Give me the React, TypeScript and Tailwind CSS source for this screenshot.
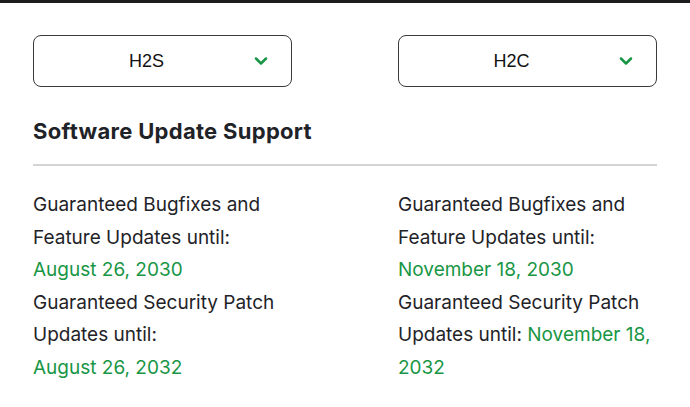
import { ChevronDown } from "lucide-react";

type Col = {
  model: string;
  featureDate: string;
  securityDate: string;
  dateOnOwnLine: boolean;
};

const cols: Col[] = [
  { model: "H2S", featureDate: "August 26, 2030", securityDate: "August 26, 2032", dateOnOwnLine: true },
  { model: "H2C", featureDate: "November 18, 2030", securityDate: "November 18, 2032", dateOnOwnLine: false },
];

function Select({ label }: { label: string }) {
  return (
    <div className="relative flex h-[52px] w-[259px] items-center justify-center rounded-lg border-[1.5px] border-[#3a3a3a] bg-white pr-8">
      <span className="font-['Liberation_Sans',Arial,sans-serif] text-[18px] text-[#111]">{label}</span>
      <ChevronDown className="absolute right-[20px] h-5 w-5 text-[#189645]" strokeWidth={3} />
    </div>
  );
}

function Column({ col }: { col: Col }) {
  return (
    <div className="w-[259px] text-[19px] leading-[32.5px] text-[#1f2328]">
      <p>Guaranteed Bugfixes and Feature Updates until:</p>
      <p className="text-[#189645]">{col.featureDate}</p>
      {col.dateOnOwnLine ? (
        <>
          <p>Guaranteed Security Patch Updates until:</p>
          <p className="text-[#189645]">{col.securityDate}</p>
        </>
      ) : (
        <p>
          Guaranteed Security Patch Updates until:{" "}
          <span className="text-[#189645]">{col.securityDate}</span>
        </p>
      )}
    </div>
  );
}

export default function App() {
  return (
    <div className="h-[407px] w-[690px] overflow-hidden bg-white font-['Inter',sans-serif]">
      <div className="h-[3px] bg-[#1c1c1c]" />
      <div className="px-[33px] pt-[32px]">
        <div className="flex justify-between">
          {cols.map((c) => (
            <Select key={c.model} label={c.model} />
          ))}
        </div>
        <h2 className="mt-[29px] text-[22px] font-bold leading-[30px] tracking-[0.3px] text-[#1f2328]">
          Software Update Support
        </h2>
        <div className="mt-[18px] h-[2px] bg-[#d4d4d4]" />
        <div className="mt-[23px] flex justify-between">
          {cols.map((c) => (
            <Column key={c.model} col={c} />
          ))}
        </div>
      </div>
    </div>
  );
}
